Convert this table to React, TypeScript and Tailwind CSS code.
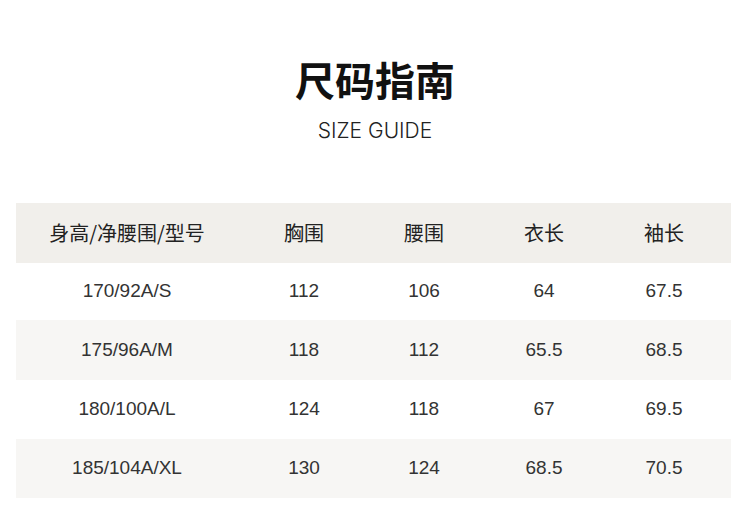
import React from "react";

const font = {
  fontFamily: '"Liberation Sans", "Noto Sans CJK SC", sans-serif',
};

const headers = ["身高/净腰围/型号", "胸围", "腰围", "衣长", "袖长"];

const rows = [
  { cells: ["170/92A/S", "112", "106", "64", "67.5"], className: "h-[57px] bg-white" },
  { cells: ["175/96A/M", "118", "112", "65.5", "68.5"], className: "h-[60px] bg-[#f7f6f4]" },
  { cells: ["180/100A/L", "124", "118", "67", "69.5"], className: "h-[59px] bg-white" },
  { cells: ["185/104A/XL", "130", "124", "68.5", "70.5"], className: "h-[59px] bg-[#f7f6f4]" },
];

const grid = "grid grid-cols-[222px_132px_108px_132px_108px] items-center";

export default function App() {
  return (
    <div className="h-[514px] w-[750px] bg-white" style={font}>
      <div className="flex flex-col items-center pt-[59px]">
        <h1
          className="text-[40px] font-bold leading-[40px] text-[#111]"
          style={{ fontFamily: '"Noto Sans CJK SC", sans-serif' }}
        >
          尺码指南
        </h1>
        <p
          className="mt-[21px] text-[21px] font-light leading-[22px] text-[#222]"
          style={{ fontFamily: '"Inter", sans-serif' }}
        >
          SIZE GUIDE
        </p>
      </div>

      <div className="mx-[16px] mt-[61px] w-[715px]">
        <div className={`${grid} h-[60px] bg-[#f1efeb]`}>
          {headers.map((h) => (
            <div
              key={h}
              className="text-center text-[20px] text-[#222]"
              style={{ fontFamily: '"Noto Sans CJK SC", sans-serif' }}
            >
              {h}
            </div>
          ))}
        </div>
        {rows.map((row) => (
          <div key={row.cells[0]} className={`${grid} ${row.className}`}>
            {row.cells.map((c, i) => (
              <div key={i} className="text-center text-[19px] text-[#333]">
                {c}
              </div>
            ))}
          </div>
        ))}
      </div>
    </div>
  );
}
